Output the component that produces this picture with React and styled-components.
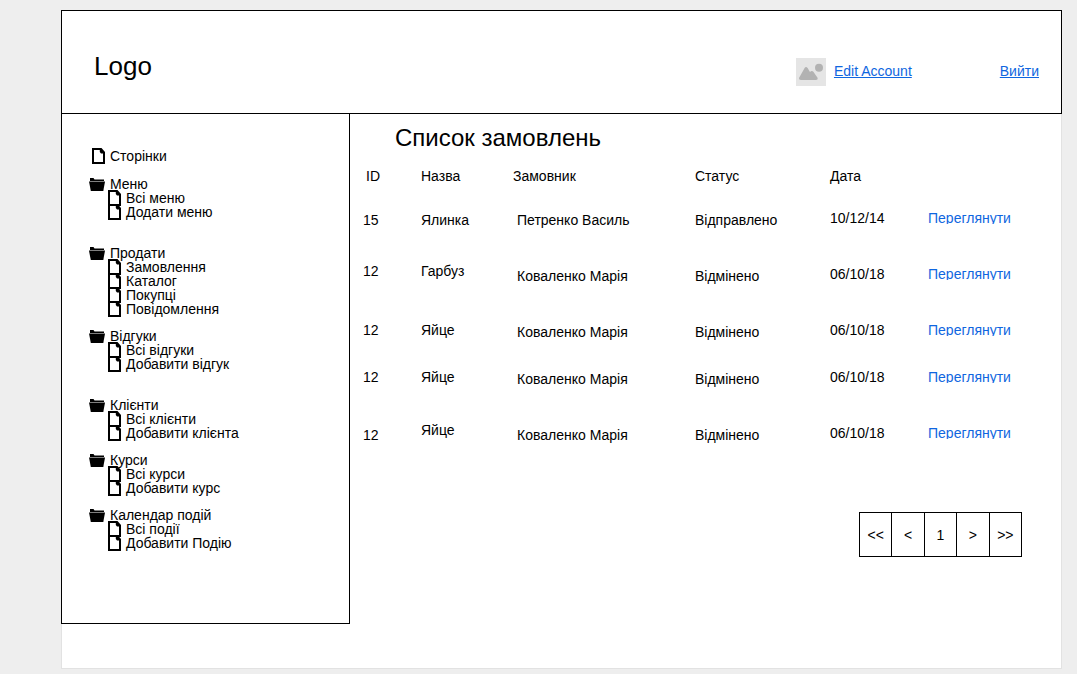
import React from "react";
import styled, { createGlobalStyle } from "styled-components";

const GlobalStyle = createGlobalStyle`
  * { box-sizing: border-box; }
  body {
    margin: 0;
    background: #eeeeee;
    color: #000;
    font-family: "Liberation Sans", Arial, Helvetica, sans-serif;
    font-size: 14px;
    line-height: 16px;
  }
`;

const Page = styled.div`
  margin: 10px 15px 5px 61px;
  padding-bottom: 44px;
  background: #fff;
  border: 1px solid #e2e2e2;
`;

const Header = styled.header`
  display: flex;
  align-items: center;
  justify-content: space-between;
  min-height: 104px;
  margin: -1px -1px 0;
  padding: 8px 22px 0 32px;
  border: 1px solid #000;
`;

const Logo = styled.div`
  font-size: 26px;
  line-height: 30px;
`;

const UserBar = styled.nav`
  display: flex;
  align-items: flex-start;
  padding-top: 12px;
  line-height: 26px;
`;

const Link = styled.a`
  color: #0f66e0;
`;

const LogoutLink = styled(Link)`
  margin-left: 88px;
`;

const Avatar = styled.svg`
  display: block;
  width: 30px;
  height: 28px;
  margin-right: 8px;
`;

const Columns = styled.div`
  display: flex;
  align-items: flex-start;
`;

const Sidebar = styled.nav`
  flex: 0 0 289px;
  margin-left: -1px;
  padding: 35px 16px 73px 27px;
  border: 1px solid #000;
  border-top: 0;
`;

const NavList = styled.ul`
  margin: 0;
  padding: 0;
  list-style: none;
`;

const NavGroup = styled.li`
  margin-top: ${(p) => p.$gap}px;
`;

const NavLink = styled.a`
  display: flex;
  align-items: center;
  height: 14px;
  line-height: 14px;
  padding-left: ${(p) => (p.$nested ? 16 : 0)}px;
  color: inherit;
  text-decoration: none;
  white-space: nowrap;
`;

const IconSlot = styled.span`
  display: flex;
  flex: none;
  justify-content: flex-end;
  width: 16px;
  margin-right: 5px;
`;

const Content = styled.main`
  flex: 1;
  min-width: 0;
  padding: 10px 39px 0 13px;
`;

const Title = styled.h1`
  margin: 0 0 16px;
  padding-left: 32px;
  font-size: 24px;
  font-weight: 400;
  line-height: 28px;
`;

const Table = styled.table`
  width: 100%;
  table-layout: fixed;
  border-collapse: collapse;
`;

const Col = styled.col`
  width: ${(p) => p.$width}px;
`;

const HeadCell = styled.th`
  height: 39px;
  padding: 0 0 0 ${(p) => p.$indent || 0}px;
  font-weight: 400;
  text-align: left;
  vertical-align: top;
`;

const Row = styled.tr`
  height: ${(p) => (p.$compact ? 47 : 56)}px;
`;

const levels = { high: 0, mid: 3, low: 5 };

const Cell = styled.td`
  padding: ${(p) => levels[p.$level]}px 0 0 ${(p) => p.$indent || 0}px;
  vertical-align: top;
  white-space: nowrap;
`;

const ViewLink = styled(Link)`
  display: block;
  height: 14px;
  overflow: hidden;
  text-decoration: none;
`;

const Pager = styled.nav`
  display: flex;
  width: 163px;
  height: 45px;
  margin: 34px 0 0 auto;
  border: 1px solid #000;
`;

const PagerButton = styled.button`
  flex: 1 1 0;
  min-width: 0;
  padding: 0;
  border: 0;
  border-left: 1px solid #000;
  background: #fff;
  color: #000;
  font: inherit;
  cursor: pointer;

  &:first-child {
    border-left: 0;
  }
`;

const FileIcon = () => (
  <svg width="13" height="16" viewBox="0 0 13 16" aria-hidden="true">
    <path
      fillRule="evenodd"
      d="M0 0h9.500l3.500 4v12H0zM2 2v12h9V5.500H9L7.800 4V2z"
    />
  </svg>
);

const FolderIcon = () => (
  <svg width="16" height="13" viewBox="0 0 16 13" aria-hidden="true">
    <path d="M1 0h3.500l1 1.500H15V3H1z" />
    <path d="M0 3.600h16L14.300 13H1.800z" />
  </svg>
);

const groups = [
  {
    title: "Меню",
    gap: 14,
    items: ["Всі меню", "Додати меню"],
  },
  {
    title: "Продати",
    gap: 27,
    items: ["Замовлення", "Каталог", "Покупці", "Повідомлення"],
  },
  {
    title: "Відгуки",
    gap: 13,
    items: ["Всі відгуки", "Добавити відгук"],
  },
  {
    title: "Клієнти",
    gap: 27,
    items: ["Всі клієнти", "Добавити клієнта"],
  },
  {
    title: "Курси",
    gap: 13,
    items: ["Всі курси", "Добавити курс"],
  },
  {
    title: "Календар подій",
    gap: 13,
    items: ["Всі події", "Добавити Подію"],
  },
];

const orders = [
  { id: "15", name: "Ялинка", customer: "Петренко Василь", status: "Відправлено", date: "10/12/14", idLevel: "low", nameLevel: "low" },
  { id: "12", name: "Гарбуз", customer: "Коваленко Марія", status: "Відмінено", date: "06/10/18", idLevel: "high", nameLevel: "high" },
  { id: "12", name: "Яйце", customer: "Коваленко Марія", status: "Відмінено", date: "06/10/18", idLevel: "mid", nameLevel: "mid", compact: true },
  { id: "12", name: "Яйце", customer: "Коваленко Марія", status: "Відмінено", date: "06/10/18", idLevel: "mid", nameLevel: "mid" },
  { id: "12", name: "Яйце", customer: "Коваленко Марія", status: "Відмінено", date: "06/10/18", idLevel: "low", nameLevel: "high" },
];

const pages = [
  ["<<", "Перша"],
  ["<", "Попередня"],
  ["1", "Сторінка 1"],
  [">", "Наступна"],
  [">>", "Остання"],
];

const NavItem = ({ label, icon, nested }) => (
  <NavLink href="#" $nested={nested}>
    <IconSlot>{icon}</IconSlot>
    {label}
  </NavLink>
);

export default function App() {
  return (
    <>
      <GlobalStyle />
      <Page>
        <Header>
          <Logo>Logo</Logo>
          <UserBar>
            <Avatar viewBox="0 0 30 28" aria-hidden="true">
              <rect width="30" height="28" fill="#e5e5e5" />
              <g fill="#b2b2b2">
                <path d="M3 20 L8.6 10 Q10 8.200 11.600 10 L14 14 Q15.500 12.200 17.200 13.400 L21.700 20 Q22 22 20 22 H5 Q2.700 22 3 20z" />
                <circle cx="23" cy="9.800" r="4" />
              </g>
            </Avatar>
            <Link href="#">Edit Account</Link>
            <LogoutLink href="#">Вийти</LogoutLink>
          </UserBar>
        </Header>
        <Columns>
          <Sidebar>
            <NavList>
              <NavGroup $gap={0}>
                <NavItem label="Сторінки" icon={<FileIcon />} />
              </NavGroup>
              {groups.map((g) => (
                <NavGroup key={g.title} $gap={g.gap}>
                  <NavItem label={g.title} icon={<FolderIcon />} />
                  <NavList>
                    {g.items.map((item) => (
                      <li key={item}>
                        <NavItem label={item} icon={<FileIcon />} nested />
                      </li>
                    ))}
                  </NavList>
                </NavGroup>
              ))}
            </NavList>
          </Sidebar>
          <Content>
            <Title>Список замовлень</Title>
            <Table>
              <colgroup>
                <Col $width={58} />
                <Col $width={92} />
                <Col $width={182} />
                <Col $width={135} />
                <Col $width={98} />
                <col />
              </colgroup>
              <thead>
                <tr>
                  <HeadCell $indent={3}>ID</HeadCell>
                  <HeadCell>Назва</HeadCell>
                  <HeadCell>Замовник</HeadCell>
                  <HeadCell>Статус</HeadCell>
                  <HeadCell>Дата</HeadCell>
                  <HeadCell aria-label="Дії" />
                </tr>
              </thead>
              <tbody>
                {orders.map((o, i) => (
                  <Row key={i} $compact={o.compact}>
                    <Cell $level={o.idLevel}>{o.id}</Cell>
                    <Cell $level={o.nameLevel}>{o.name}</Cell>
                    <Cell $level="low" $indent={4}>{o.customer}</Cell>
                    <Cell $level="low">{o.status}</Cell>
                    <Cell $level="mid">{o.date}</Cell>
                    <Cell $level="mid">
                      <ViewLink href="#">Переглянути</ViewLink>
                    </Cell>
                  </Row>
                ))}
              </tbody>
            </Table>
            <Pager aria-label="Сторінки списку">
              {pages.map(([text, label]) => (
                <PagerButton key={text} type="button" aria-label={label}>
                  {text}
                </PagerButton>
              ))}
            </Pager>
          </Content>
        </Columns>
      </Page>
    </>
  );
}
